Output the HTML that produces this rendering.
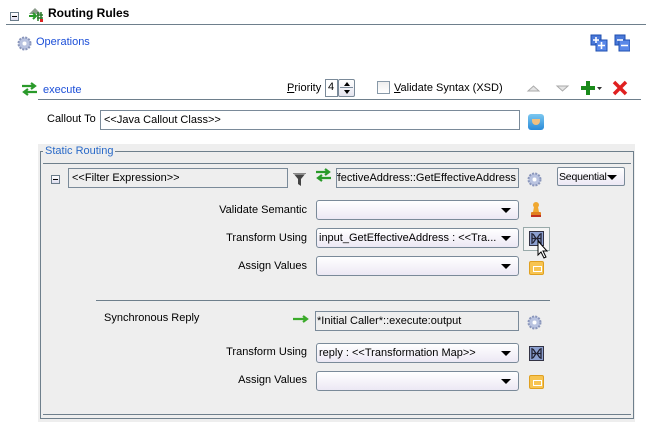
<!DOCTYPE html>
<html><head><meta charset="utf-8"><style>
*{margin:0;padding:0;box-sizing:border-box}
body{width:650px;height:424px;background:#fff;font-family:"Liberation Sans",Arial,sans-serif;font-size:11px;color:#000;position:relative;overflow:hidden}
.a{position:absolute}
.lbl{position:absolute;white-space:nowrap;line-height:14px}
.r{text-align:right}
.blue{color:#1c4fd8}
.inp{position:absolute;border:1px solid #7a8a99;background:#fff;padding-left:3px;line-height:18px;white-space:nowrap;overflow:hidden}
.ro{background:#eeeeee}
.sel{position:absolute;border:1px solid #7a8a99;border-radius:3px;background:linear-gradient(#fff,#ece8f4);padding-left:2px;line-height:18px;white-space:nowrap;overflow:hidden}
.sel:after{content:"";position:absolute;right:7px;top:7px;border-left:5px solid transparent;border-right:5px solid transparent;border-top:5px solid #000}
.hl{position:absolute;height:1px;background:#6e7f8c}
.vl{position:absolute;width:1px;background:#6e7f8c}
.min{position:absolute;width:9px;height:9px;border:1px solid #6a7c8a;background:linear-gradient(#fff,#dde);}
.min:after{content:"";position:absolute;left:1px;top:3px;width:5px;height:1px;background:#000}
.asg{position:absolute;width:15px;height:14px;border-radius:2px;background:#f7c451;border:1px solid #e0a020}
.asg:after{content:"";position:absolute;left:3px;top:4px;width:7px;height:4px;border:1px solid #fff}
</style></head><body>
<div class="min" style="left:10px;top:12px"></div>
<svg class="a" style="left:27px;top:6px" width="18" height="16"><path d="M2 8 L8 2 L14 8 Z" fill="#8a9a8a"/><path d="M2 10h7M6 7l3 3-3 3" stroke="#2a9a2a" stroke-width="2" fill="none"/><path d="M11 6v9M14 6v9M10 9h6M10 12h6" stroke="#2a7a2a" stroke-width="1.5"/><rect x="13" y="13" width="3" height="3" fill="#d22"/></svg>
<div class="lbl" style="left:48px;top:6px;font-weight:bold;font-size:12px">Routing Rules</div>
<div class="hl" style="left:6px;top:24px;width:640px"></div>
<svg class="a" style="left:17px;top:36px" width="15" height="15"><circle cx="7.5" cy="7.5" r="6" fill="#b9c3e0" stroke="#8a96bb" stroke-dasharray="2 1.2" stroke-width="2"/><circle cx="7.5" cy="7.5" r="2" fill="#fff"/></svg>
<div class="lbl blue" style="left:36px;top:35px">Operations</div>
<svg class="a" style="left:590px;top:34px" width="40" height="20"><rect x="1" y="1" width="10" height="10" fill="#4a78d8" stroke="#1f4fb0"/><rect x="6" y="6" width="11" height="11" fill="#5a88e8" stroke="#1f4fb0"/><path d="M3 6h6M6 3v6M8 11.5h7M11.5 8v7" stroke="#fff" stroke-width="1.6"/><rect x="25" y="1" width="10" height="10" fill="#4a78d8" stroke="#1f4fb0"/><rect x="29" y="6" width="11" height="11" fill="#5a88e8" stroke="#1f4fb0"/><path d="M27 6h6M31 11.5h7" stroke="#fff" stroke-width="1.6"/></svg>
<svg class="a" style="left:21px;top:82px" width="17" height="14"><path d="M1 4h12M10 1l4 3-4 3" stroke="#2a9a2a" stroke-width="2.2" fill="none"/><path d="M16 10H4M7 7l-4 3 4 3" stroke="#2a9a2a" stroke-width="2.2" fill="none"/></svg>
<div class="lbl blue" style="left:43px;top:83px">execute</div>
<div class="hl" style="left:38px;top:99px;width:603px"></div>
<div class="lbl" style="left:287px;top:81px"><u>P</u>riority</div>
<div class="inp" style="left:325px;top:79px;width:13px;height:18px;line-height:15px;padding-left:2px">4</div>
<div class="a" style="left:338px;top:79px;width:17px;height:18px;border:1px solid #7a8a99;border-radius:2px;background:linear-gradient(#fff,#e4e4ee)"><div class="a" style="left:5px;top:2px;border-left:3px solid transparent;border-right:3px solid transparent;border-bottom:4px solid #000"></div><div class="a" style="left:1px;top:7px;width:13px;height:1px;background:#7a8a99"></div><div class="a" style="left:5px;top:10px;border-left:3px solid transparent;border-right:3px solid transparent;border-top:4px solid #000"></div></div>
<div class="a" style="left:377px;top:81px;width:13px;height:13px;border:1px solid #8899a8;background:linear-gradient(#eee,#fff)"></div>
<div class="lbl" style="left:394px;top:81px"><u>V</u>alidate Syntax (XSD)</div>
<svg class="a" style="left:526px;top:84px" width="45" height="10"><path d="M2 7h11L7.5 2z" fill="#e4e4e4" stroke="#aaa"/><path d="M31 2h11l-5.5 5z" fill="#e4e4e4" stroke="#aaa"/></svg>
<svg class="a" style="left:581px;top:80px" width="50" height="16"><path d="M7 1v14M0 8h14" stroke="#1a8a1a" stroke-width="4"/><path d="M16 7h5l-2.5 3z" fill="#333"/><path d="M33 2l12 12M45 2L33 14" stroke="#e02020" stroke-width="3.5"/></svg>
<div class="lbl" style="left:47px;top:112px">Callout To</div>
<div class="inp" style="left:100px;top:110px;width:420px;height:20px">&lt;&lt;Java Callout Class&gt;&gt;</div>
<div class="a" style="left:528px;top:114px;width:16px;height:16px;border-radius:3px;background:linear-gradient(#7cc8f0,#2a8ad8)"><div class="a" style="left:4px;top:5px;width:8px;height:6px;border-radius:0 0 4px 4px;background:#f0c080"></div></div>
<div class="a" style="left:38px;top:144px;width:597px;height:278px;background:#eeeeee"></div>
<div class="vl" style="left:40px;top:151px;height:267px"></div>
<div class="vl" style="left:633px;top:151px;height:267px"></div>
<div class="hl" style="left:40px;top:151px;width:3px"></div>
<div class="hl" style="left:113px;top:151px;width:521px"></div>
<div class="hl" style="left:40px;top:418px;width:594px"></div>
<div class="hl" style="left:43px;top:163px;width:588px"></div>
<div class="hl" style="left:43px;top:414px;width:588px"></div>
<div class="lbl" style="left:45px;top:144px;color:#2a6ac8;background:#eee;padding-right:2px">Static Routing</div>
<div class="min" style="left:51px;top:175px"></div>
<div class="inp ro" style="left:68px;top:168px;width:220px;height:20px">&lt;&lt;Filter Expression&gt;&gt;</div>
<svg class="a" style="left:292px;top:171px" width="16" height="16"><path d="M1 2h13l-5 6v7l-3-2V8z" fill="#444"/><path d="M2 3h11" stroke="#ccc"/></svg>
<svg class="a" style="left:315px;top:168px" width="17" height="14"><path d="M1 4h12M10 1l4 3-4 3" stroke="#2a9a2a" stroke-width="2.2" fill="none"/><path d="M16 10H4M7 7l-4 3 4 3" stroke="#2a9a2a" stroke-width="2.2" fill="none"/></svg>
<div class="inp ro" style="left:336px;top:168px;width:183px;height:20px;direction:rtl;text-align:left;padding-right:2px"><span style="direction:ltr;unicode-bidi:bidi-override">ffectiveAddress::GetEffectiveAddress</span></div>
<svg class="a" style="left:527px;top:172px" width="15" height="15"><circle cx="7.5" cy="7.5" r="6" fill="#b9c3e0" stroke="#8a96bb" stroke-dasharray="2 1.2" stroke-width="2"/><circle cx="7.5" cy="7.5" r="2" fill="#fff"/></svg>
<div class="sel" style="left:557px;top:167px;width:68px;height:19px;border-radius:2px;font-size:10.5px;letter-spacing:-0.2px;padding-left:1px">Sequential</div>
<div class="lbl r" style="left:160px;width:147px;top:203px">Validate Semantic</div>
<div class="sel" style="left:316px;top:200px;width:203px;height:20px"></div>
<svg class="a" style="left:529px;top:201px" width="14" height="17"><circle cx="7" cy="4" r="3" fill="#f0a830"/><path d="M5 6h4l1 5H4z" fill="#f0a830"/><rect x="2" y="11" width="10" height="4" rx="1" fill="#e08020"/><rect x="2" y="14" width="10" height="2" fill="#c03020"/></svg>
<div class="lbl r" style="left:160px;width:147px;top:231px">Transform Using</div>
<div class="sel" style="left:316px;top:228px;width:203px;height:20px;padding-right:20px">input_GetEffectiveAddress : &lt;&lt;Tra...</div>
<div class="a" style="left:523px;top:227px;width:27px;height:24px;border:1px solid #9aa;background:#f4f4f4"></div>
<svg class="a" style="left:529px;top:231px" width="15" height="15"><rect x="0.5" y="0.5" width="14" height="14" fill="#8ca0d0" stroke="#334"/><path d="M3 2v11M12 2v11M3 7.5h9M4 3l3 4.5-3 4.5M11 3L8 7.5 11 12" stroke="#223" stroke-width="1.3" fill="none"/></svg>
<svg class="a" style="left:537px;top:240px" width="14" height="20"><path d="M1 1v14l3-3 3 6 2-1-3-6h4z" fill="#fff" stroke="#000"/></svg>
<div class="lbl r" style="left:160px;width:147px;top:259px">Assign Values</div>
<div class="sel" style="left:316px;top:256px;width:203px;height:20px"></div>
<div class="asg" style="left:529px;top:261px"></div>
<div class="hl" style="left:96px;top:300px;width:454px"></div>
<div class="lbl" style="left:104px;top:311px">Synchronous Reply</div>
<svg class="a" style="left:292px;top:314px" width="18" height="10"><path d="M1 5h13M11 2l4 3-4 3" stroke="#3aaa2a" stroke-width="2.2" fill="none"/></svg>
<div class="inp ro" style="left:315px;top:311px;width:204px;height:20px;padding-left:1px">*Initial Caller*::execute:output</div>
<svg class="a" style="left:527px;top:315px" width="15" height="15"><circle cx="7.5" cy="7.5" r="6" fill="#b9c3e0" stroke="#8a96bb" stroke-dasharray="2 1.2" stroke-width="2"/><circle cx="7.5" cy="7.5" r="2" fill="#fff"/></svg>
<div class="lbl r" style="left:160px;width:147px;top:345px">Transform Using</div>
<div class="sel" style="left:316px;top:343px;width:203px;height:20px">reply : &lt;&lt;Transformation Map&gt;&gt;</div>
<svg class="a" style="left:529px;top:346px" width="15" height="15"><rect x="0.5" y="0.5" width="14" height="14" fill="#8ca0d0" stroke="#334"/><path d="M3 2v11M12 2v11M3 7.5h9M4 3l3 4.5-3 4.5M11 3L8 7.5 11 12" stroke="#223" stroke-width="1.3" fill="none"/></svg>
<div class="lbl r" style="left:160px;width:147px;top:373px">Assign Values</div>
<div class="sel" style="left:316px;top:371px;width:203px;height:20px"></div>
<div class="asg" style="left:529px;top:375px"></div>
</body></html>
